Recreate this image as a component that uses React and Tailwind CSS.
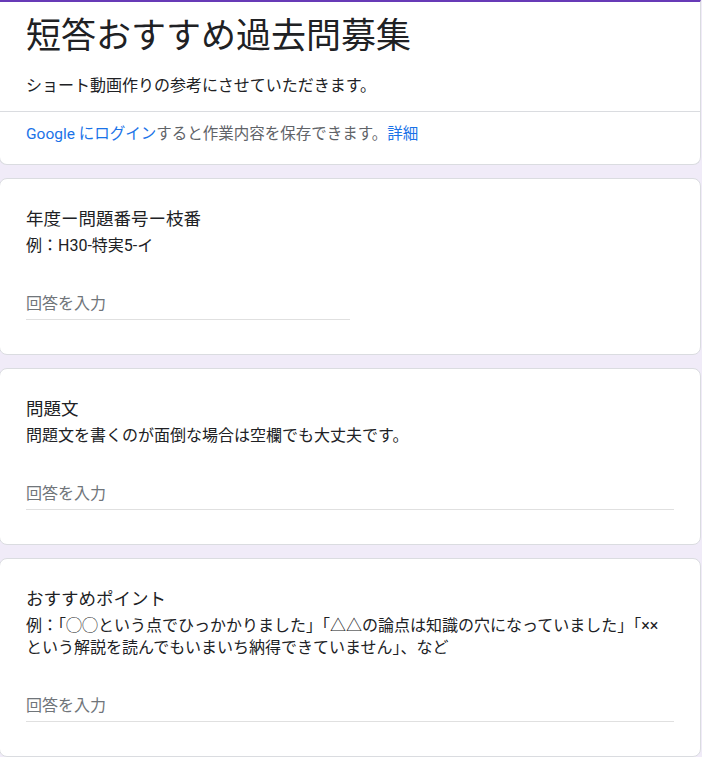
import React from "react";

const font = { fontFamily: 'Roboto, "Noto Sans CJK JP", sans-serif' };

function Question({ title, desc, half }) {
  return (
    <div className="w-[702px] -ml-px bg-white border border-[#dadce0] rounded-[8px] px-[26px] pt-[26px] pb-[34px]">
      <div className="text-[17.5px] leading-[28px] text-[#202124]">{title}</div>
      <div className="mt-[2px] text-[16px] leading-[22px] text-[#202124]">{desc}</div>
      <div className={`mt-[36px] pb-[4px] border-b border-[#e0e0e0] ${half ? "w-1/2" : "w-full"}`}>
        <div className="text-[16px] leading-[22px] text-[#70757a]">回答を入力</div>
      </div>
    </div>
  );
}

export default function App() {
  return (
    <div style={font} className="min-h-[757px] bg-[#f0ebf8] overflow-hidden flex flex-col gap-[13px]">
      <div className="w-[702px] -ml-px bg-white border border-[#dadce0] border-t-2 border-t-[#673ab7] rounded-b-[8px]">
        <div className="px-[26px] pt-[13px] pb-[14px]">
          <div className="text-[35px] leading-[44px] text-[#202124]">短答おすすめ過去問募集</div>
          <div className="mt-[16px] text-[16px] leading-[22px] text-[#202124]">
            ショート動画作りの参考にさせていただきます。
          </div>
        </div>
        <div className="border-t border-[#dadce0] px-[26px] pt-[11px] pb-[19px] text-[15.5px] leading-[22px] text-[#5f6368]">
          <span className="text-[#1a73e8]">Google にログイン</span>すると作業内容を保存できます。<span className="text-[#1a73e8]">詳細</span>
        </div>
      </div>
      <Question title="年度ー問題番号ー枝番" desc="例：H30-特実5-イ" half />
      <Question title="問題文" desc="問題文を書くのが面倒な場合は空欄でも大丈夫です。" />
      <Question
        title="おすすめポイント"
        desc="例：「◯◯という点でひっかかりました」「△△の論点は知識の穴になっていました」「××という解説を読んでもいまいち納得できていません」、など"
      />
    </div>
  );
}
